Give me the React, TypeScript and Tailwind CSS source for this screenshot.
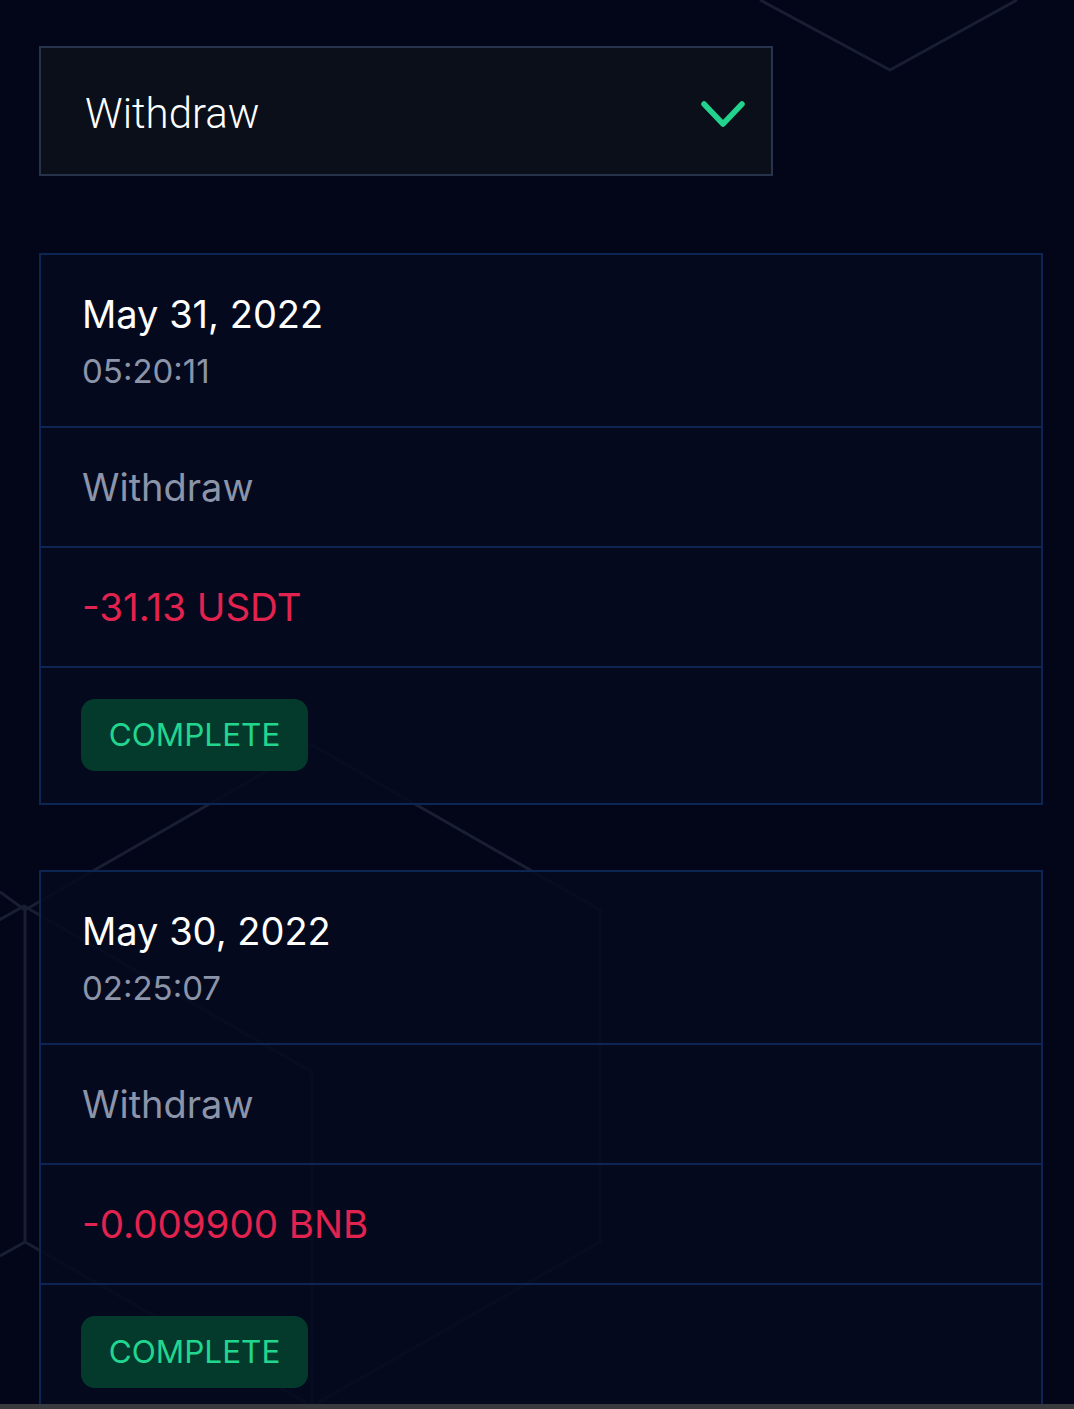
import React from "react";

const roboto = { fontFamily: "Roboto, 'Noto Sans', sans-serif" };
const inter = { fontFamily: "Inter, 'Noto Sans', sans-serif" };

function Background() {
  return (
    <svg
      className="absolute inset-0 z-0"
      width="1074"
      height="1409"
      viewBox="0 0 1074 1409"
      fill="none"
    >
      <g stroke="#1a1e32" strokeWidth="3" strokeLinejoin="round">
        <polyline points="760,0 890,70 1017,0" />
        <polygon points="312,745 600,910 600,1242 312,1406 25,1242 25,910" />
        <polyline points="-270,1072 24,906 312,1072 312,1420" />
        <polyline points="0,892 25,910" />
        <polyline points="0,1256 25,1242" />
      </g>
    </svg>
  );
}

function Card({
  date,
  time,
  amount,
}: {
  date: string;
  time: string;
  amount: string;
}) {
  return (
    <div className="w-[1004px] border-2 border-[#0d2552] bg-[#050b1f]/85" style={inter}>
      <div className="pl-[41px] pt-[35px] pb-[35px]">
        <div className="text-[38px] leading-[48px] text-white">{date}</div>
        <div className="mt-[13px] text-[33px] leading-[40px] text-[#8b94a8]">
          {time}
        </div>
      </div>
      <div className="flex h-[120px] items-center border-t-2 border-[#0d2552] pl-[41px]">
        <span className="text-[38px] leading-[48px] text-[#8b94a8]">
          Withdraw
        </span>
      </div>
      <div className="flex h-[120px] items-center border-t-2 border-[#0d2552] pl-[41px]">
        <span className="text-[38.5px] leading-[48px] text-[#e2224f]">
          {amount}
        </span>
      </div>
      <div className="border-t-2 border-[#0d2552] pl-[40px] pt-[31px] pb-[32px]">
        <div className="flex h-[72px] w-[227px] items-center justify-center rounded-[14px] bg-[#033a2b] text-[31.5px] text-[#22d690]">
          COMPLETE
        </div>
      </div>
    </div>
  );
}

export default function App() {
  return (
    <div
      className="relative h-[1409px] w-[1074px] overflow-hidden bg-[#020618]"
      style={roboto}
    >
      <Background />
      <div className="relative z-10 flex flex-col pl-[39px] pt-[46px]">
        <div className="flex h-[130px] w-[734px] items-center justify-between border-2 border-[#27334b] bg-[#0a0f19] pl-[44px] pr-[24px]">
          <span className="mt-[6px] text-[42px] font-light leading-[48px] text-white">
            Withdraw
          </span>
          <svg width="48" height="36" viewBox="0 0 48 36" fill="none" className="mt-[6px]">
            <path
              d="M5 8 L24 28 L43 8"
              stroke="#22d38d"
              strokeWidth="5.5"
              strokeLinecap="round"
              strokeLinejoin="round"
            />
          </svg>
        </div>
        <div className="mt-[77px] flex flex-col gap-[65px]">
          <Card date="May 31, 2022" time="05:20:11" amount="-31.13 USDT" />
          <Card date="May 30, 2022" time="02:25:07" amount="-0.009900 BNB" />
        </div>
      </div>
      <div className="absolute bottom-0 left-0 z-20 h-[5px] w-full bg-[#3a3b3e]" />
    </div>
  );
}
